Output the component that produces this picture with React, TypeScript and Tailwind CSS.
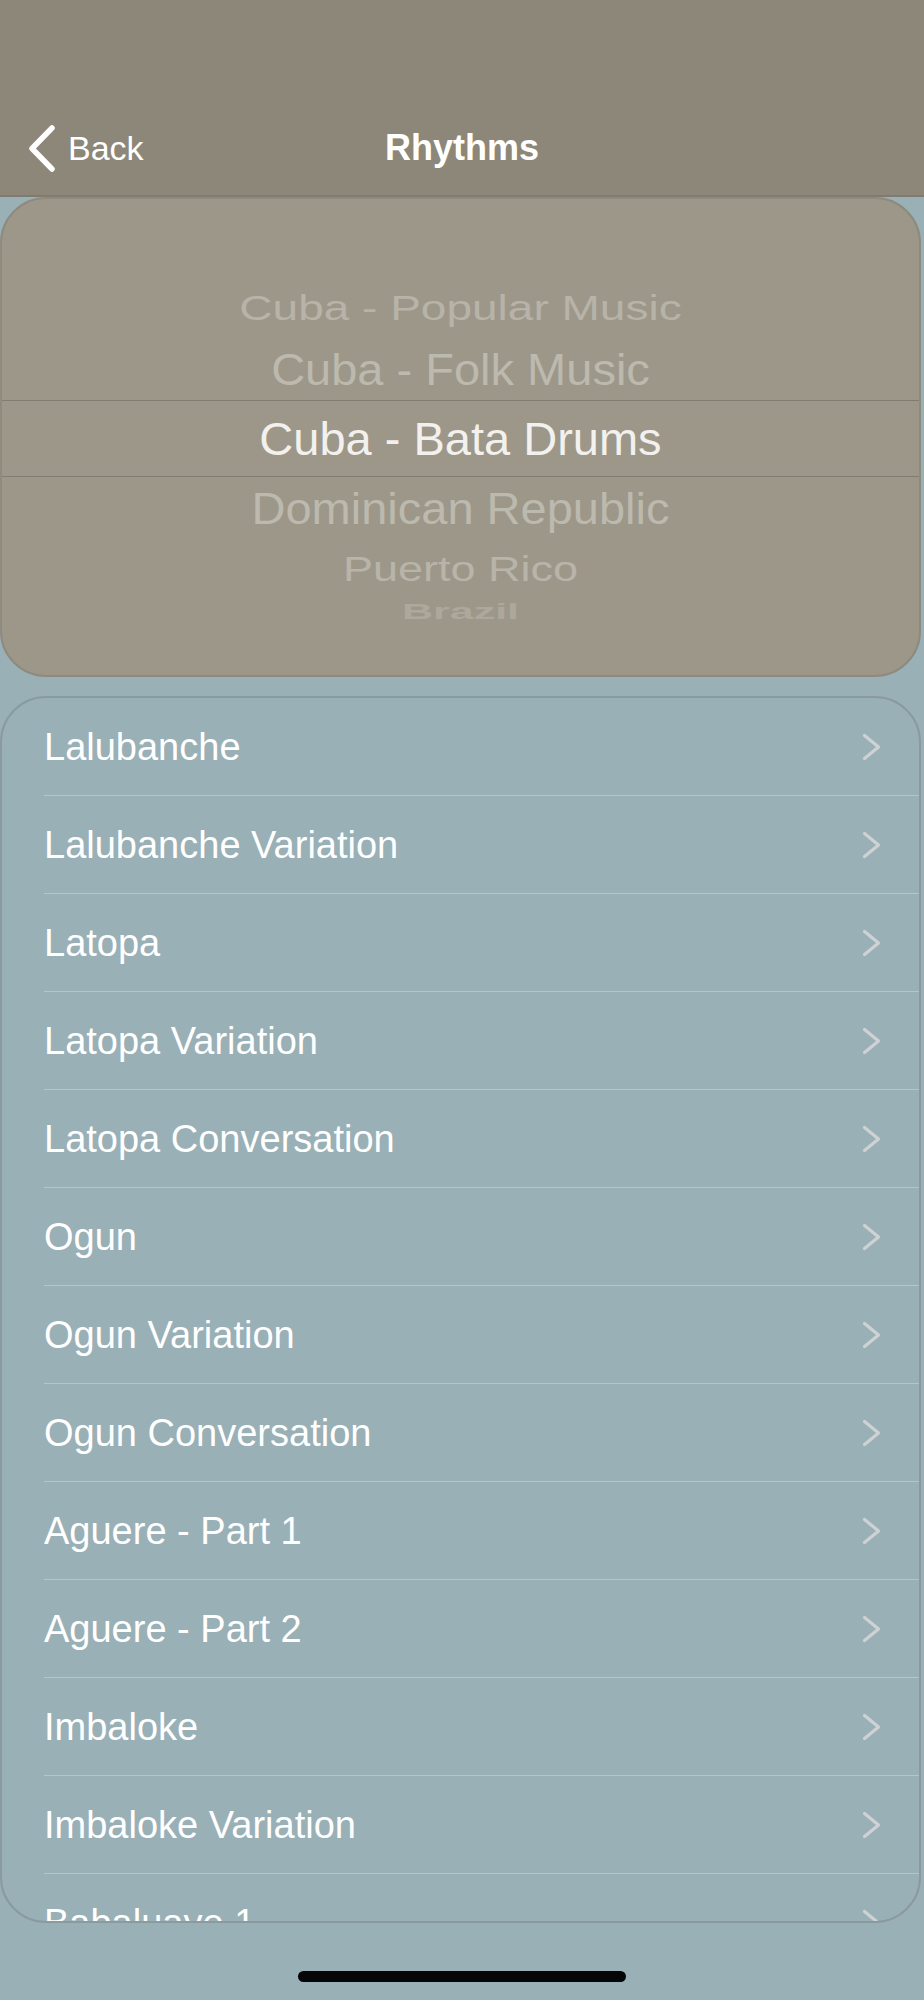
import React from 'react';

const font = { fontFamily: '"Liberation Sans", Arial, sans-serif' };

const rhythms = [
  'Lalubanche',
  'Lalubanche Variation',
  'Latopa',
  'Latopa Variation',
  'Latopa Conversation',
  'Ogun',
  'Ogun Variation',
  'Ogun Conversation',
  'Aguere - Part 1',
  'Aguere - Part 2',
  'Imbaloke',
  'Imbaloke Variation',
  'Babaluaye 1',
];

function BackChevron() {
  return (
    <svg width="28" height="47" viewBox="0 0 28 47" fill="none">
      <path d="M24 3 L4 23.5 L24 44" stroke="#ffffff" strokeWidth="5.5" strokeLinecap="round" strokeLinejoin="round" />
    </svg>
  );
}

function RowChevron() {
  return (
    <svg width="19" height="28" viewBox="0 0 19 28" fill="none">
      <path d="M2.5 2.5 L16.5 14 L2.5 25.5" stroke="#cfd2d5" strokeWidth="3.2" strokeLinecap="round" strokeLinejoin="round" />
    </svg>
  );
}

function Header() {
  return (
    <div className="flex h-[197px] flex-col justify-end border-b-2 border-[#7f7b70] bg-[#8c8779]">
      <div className="mb-[17px] grid h-[60px] grid-cols-[1fr_auto_1fr] items-center">
        <div className="flex items-center gap-[12px] pl-[28px]">
          <BackChevron />
          <span className="text-[34px] leading-none text-white">Back</span>
        </div>
        <span className="text-[36px] font-bold leading-none text-white">Rhythms</span>
        <div />
      </div>
    </div>
  );
}

function Picker() {
  return (
    <div className="mr-[3px] h-[480px] overflow-hidden rounded-[46px] border-2 border-[#8f8a7e] bg-[#9d978a] pt-[78px]">
      <div className="flex h-[62px] items-center justify-center">
        <span className="scale-y-[0.76] text-[46px] leading-none text-[#b7b3a8]">Cuba - Popular Music</span>
      </div>
      <div className="flex h-[61px] items-center justify-center">
        <span className="scale-y-[0.95] text-[47px] leading-none text-[#bcb9ae]">Cuba - Folk Music</span>
      </div>
      <div className="flex h-[77px] items-center justify-center border-y border-[#807c71]">
        <span className="text-[47px] leading-none text-[#f3f1ed]">Cuba - Bata Drums</span>
      </div>
      <div className="flex h-[62px] items-center justify-center">
        <span className="scale-y-[0.95] text-[47px] leading-none text-[#bcb9ae]">Dominican Republic</span>
      </div>
      <div className="flex h-[59px] items-center justify-center">
        <span className="scale-y-[0.8] text-[45px] leading-none text-[#b8b4a9]">Puerto Rico</span>
      </div>
      <div className="flex h-[27px] items-center justify-center">
        <span className="scale-y-[0.5] text-[43px] font-bold leading-none text-[#aca89b]">Brazil</span>
      </div>
      <div className="flex h-[10px] items-start justify-center overflow-hidden">
        <span className="-mt-[4px] scale-y-[0.3] text-[40px] font-bold leading-none text-[#a7a396]">Peru</span>
      </div>
    </div>
  );
}

function RhythmList() {
  return (
    <div className="mr-[3px] mt-[19px] h-[1227px] overflow-hidden rounded-[46px] border-2 border-[#8a9b9f] bg-[#99b0b6]">
      {rhythms.map((name) => (
        <div key={name} className="ml-[42px] flex h-[98px] items-center justify-between border-b border-[#b7c5c9] pr-[38px]">
          <span className="text-[38px] leading-none text-white">{name}</span>
          <RowChevron />
        </div>
      ))}
    </div>
  );
}

export default function App() {
  return (
    <div className="min-h-screen w-full bg-[#99b0b6]" style={font}>
      <Header />
      <Picker />
      <RhythmList />
      <div className="mt-[48px] flex justify-center">
        <div className="h-[11px] w-[328px] rounded-full bg-[#060606]" />
      </div>
    </div>
  );
}
